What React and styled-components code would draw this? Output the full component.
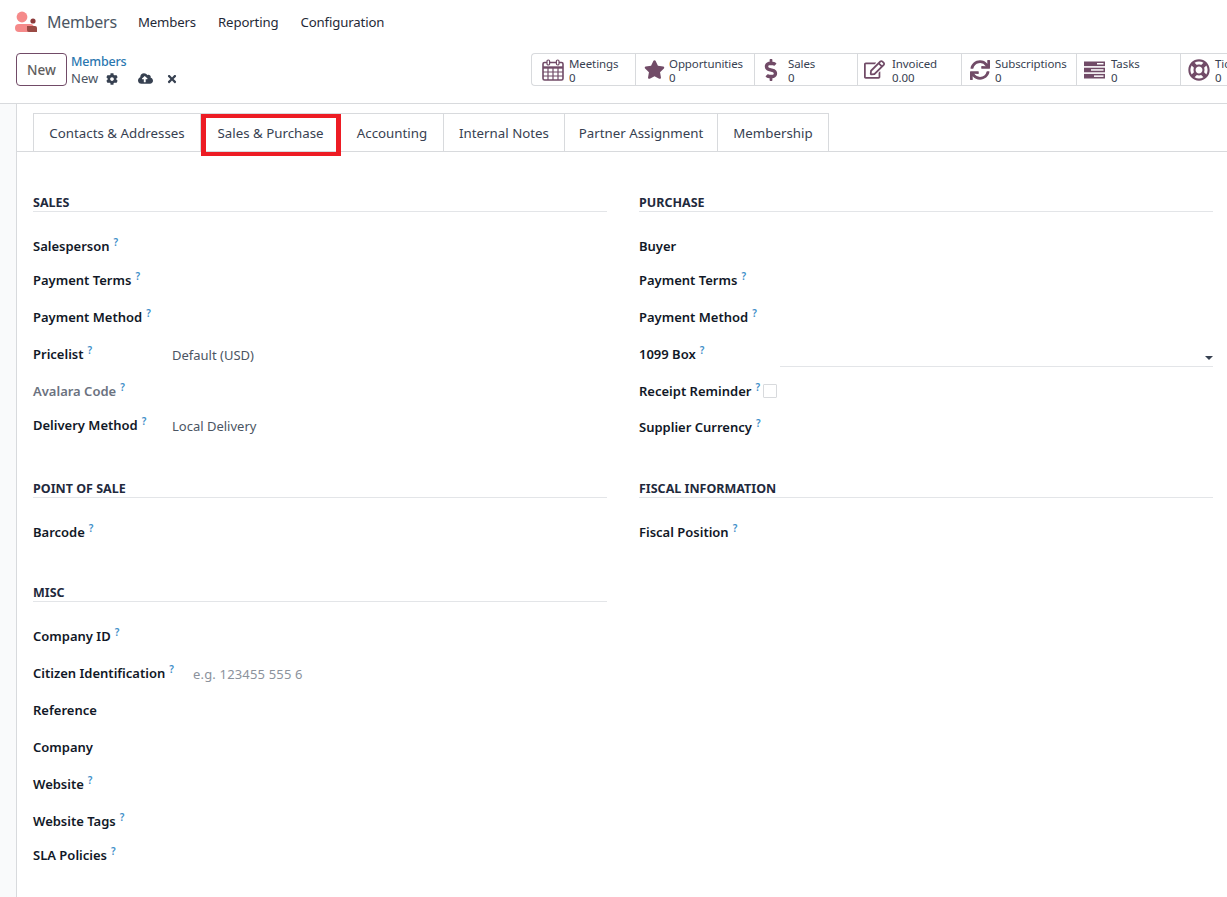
import styled, { createGlobalStyle } from "styled-components";
import { FaCog, FaCloudUploadAlt, FaTimes, FaStar, FaDollarSign, FaRegEdit, FaSync, FaRegLifeRing } from "react-icons/fa";

const GlobalStyle = createGlobalStyle`
    html, body {
        margin: 0;
        padding: 0;
        background: #ffffff;
    }

    body {
        font-family: "Noto Sans", "Open Sans", sans-serif;
        font-size: 13px;
        color: #374151;
    }
`;

const Page = styled.div`
    width: 1227px;
    height: 897px;
    overflow: hidden;
    display: flex;
    flex-direction: column;
`;

const NavBar = styled.nav`
    height: 44px;
    display: flex;
    align-items: center;
    flex: none;
`;

const Logo = styled.svg`
    width: 24px;
    height: 24px;
    margin-left: 15px;
`;

const Brand = styled.span`
    margin-left: 8px;
    margin-right: 21px;
    font-size: 16px;
    letter-spacing: -0.25px;
    color: #4b5563;
`;

const NavItem = styled.span`
    margin-right: 22px;
    font-size: 13.2px;
    letter-spacing: -0.13px;
    color: #1f2937;
`;

const ControlPanel = styled.div`
    height: 59px;
    flex: none;
    display: flex;
    align-items: flex-start;
    border-bottom: 1px solid #d8dadd;
    overflow: hidden;
`;

const PanelLeft = styled.div`
    width: 531px;
    flex: none;
    display: flex;
    padding-left: 16px;
    padding-top: 9px;
    box-sizing: border-box;
`;

const NewButton = styled.button`
    width: 51px;
    height: 33px;
    background: #ffffff;
    border: 1px solid #714b67;
    border-radius: 4px;
    padding: 0;
    font-family: inherit;
    font-size: 13.5px;
    font-weight: 500;
    color: #5f5e5e;
`;

const Breadcrumb = styled.div`
    margin-left: 4px;
    line-height: 17px;
    font-size: 13px;
`;

const CrumbLink = styled.div`
    font-size: 12.5px;
    color: #2a77b0;
    font-weight: 500;
    letter-spacing: -0.2px;
`;

const CrumbCurrent = styled.div`
    display: flex;
    align-items: center;
    color: #4b5563;
    letter-spacing: 0;
`;

const CrumbIcon = styled.span`
    display: inline-flex;
    margin-left: ${p => p.$gap}px;
    font-size: ${p => p.$size}px;
    color: #374151;
`;

const Stats = styled.div`
    display: flex;
    flex: none;
    height: 33px;
    margin-top: 9px;
    border: 1px solid #d8dadd;
    border-right: none;
    border-radius: 4px 0 0 4px;
    box-sizing: border-box;
`;

const Stat = styled.div`
    width: ${p => p.$width}px;
    box-sizing: border-box;
    display: flex;
    align-items: center;
    padding-left: ${p => p.$pad}px;
    border-right: 1px solid #d8dadd;
`;

const StatIcon = styled.span`
    flex: none;
    display: inline-flex;
    justify-content: center;
    width: ${p => p.$size}px;
    margin-right: ${p => p.$gap}px;
    font-size: ${p => p.$size}px;
    color: #714b67;
`;

const StatText = styled.div`
    padding-top: 2px;
    font-size: 11.5px;
    line-height: 14px;
    letter-spacing: -0.1px;
    color: #374151;
    white-space: nowrap;
`;

const Body = styled.div`
    flex: 1;
    display: flex;
    min-height: 0;
`;

const Gutter = styled.div`
    width: 16px;
    flex: none;
    background: #f9fafb;
    border-right: 1px solid #d8dadd;
`;

const Sheet = styled.div`
    flex: 1;
    padding-top: 9px;
    min-width: 0;
`;

const Tabs = styled.div`
    display: flex;
    height: 39px;
    box-sizing: border-box;
    padding-left: 16px;
    border-bottom: 1px solid #d8dadd;
`;

const Tab = styled.div`
    position: relative;
    width: ${p => p.$width}px;
    height: 38px;
    box-sizing: border-box;
    display: flex;
    align-items: center;
    justify-content: center;
    border: 1px solid #d8dadd;
    border-left-width: ${p => (p.$first ? 1 : 0)}px;
    border-bottom: none;
    font-size: 13.3px;
    color: #374151;
`;

const Highlight = styled.div`
    position: absolute;
    left: 0;
    top: 0;
    width: 140px;
    height: 42px;
    box-sizing: border-box;
    border-style: solid;
    border-color: #ed1c24;
    border-width: 4px 5px;
`;

const FormGrid = styled.div`
    display: grid;
    grid-template-columns: 574px 574px;
    column-gap: 32px;
    padding-left: 16px;
`;

const Section = styled.section`
    margin-top: ${p => p.$top}px;
`;

const SectionTitle = styled.h3`
    margin: 0 0 17px;
    height: 20px;
    box-sizing: border-box;
    line-height: 21px;
    border-bottom: 1px solid #e3e5e8;
    font-size: 12.5px;
    font-weight: 700;
    color: #1f2a3d;
`;

const Row = styled.div`
    position: relative;
    height: ${p => p.$height}px;
    display: flex;
    align-items: flex-start;
`;

const Label = styled.div`
    width: ${p => p.$width}px;
    flex: none;
    display: flex;
    line-height: 18px;
    padding-top: 8px;
    font-size: 13px;
    font-weight: 600;
    white-space: nowrap;
    color: ${p => (p.$muted ? "#6b7280" : "#111827")};
`;

const Help = styled.sup`
    margin-left: 4px;
    font-size: 10px;
    line-height: 10px;
    font-weight: 600;
    color: #3f8fc9;
    vertical-align: top;
`;

const Value = styled.div`
    padding-top: 9px;
    line-height: 19px;
    font-size: 13px;
    letter-spacing: ${p => (p.$placeholder ? 0.17 : 0)}px;
    color: ${p => (p.$placeholder ? "#8b929c" : "#4b5563")};
`;

const SelectField = styled.div`
    position: relative;
    flex: 1;
    height: 28px;
    margin-top: 1px;
    border-bottom: 1px solid #e3e5e8;
`;

const Caret = styled.span`
    position: absolute;
    right: 0;
    top: 18px;
    width: 0;
    height: 0;
    border-left: 4px solid transparent;
    border-right: 4px solid transparent;
    border-top: 4px solid #374151;
`;

const Checkbox = styled.span`
    display: block;
    width: 14px;
    height: 14px;
    margin-top: 10px;
    box-sizing: border-box;
    border: 1px solid #d8dadd;
    border-radius: 1px;
    background: #ffffff;
`;

function CalendarIcon() {
    return (
        <svg width="22" height="22" viewBox="0 0 22 22" fill="none" stroke="#714b67">
            <rect x="1" y="3.5" width="20" height="17.5" rx="1.5" strokeWidth="1.6" />
            <path d="M1 8.5h20" strokeWidth="2.4" />
            <path d="M6 9v12M11 9v12M16 9v12M1 13h20M1 17h20" strokeWidth="1.2" />
            <rect x="5" y="1" width="2.6" height="5" rx="1.2" fill="#ffffff" strokeWidth="1.2" />
            <rect x="14.4" y="1" width="2.6" height="5" rx="1.2" fill="#ffffff" strokeWidth="1.2" />
        </svg>
    );
}

function TasksIcon() {
    return (
        <svg width="21" height="18" viewBox="0 0 21 18" fill="#714b67">
            <rect x="0" y="0.5" width="21" height="4.6" />
            <rect x="0" y="6.7" width="21" height="4.6" />
            <rect x="0" y="12.9" width="21" height="4.6" />
            <rect x="13" y="2" width="6.5" height="1.5" fill="#ffffff" />
            <rect x="7" y="8.2" width="12.5" height="1.5" fill="#ffffff" />
            <rect x="10" y="14.4" width="9.5" height="1.5" fill="#ffffff" />
        </svg>
    );
}

const statItems = [
    { title: "Meetings", value: "0", width: 104, pad: 10, size: 22, gap: 5, icon: <CalendarIcon /> },
    { title: "Opportunities", value: "0", width: 119, pad: 8, size: 21, gap: 4, icon: <FaStar /> },
    { title: "Sales", value: "0", width: 103, pad: 5, size: 22, gap: 6, icon: <FaDollarSign /> },
    { title: "Invoiced", value: "0.00", width: 104, pad: 6, size: 21, gap: 7, icon: <FaRegEdit /> },
    { title: "Subscriptions", value: "0", width: 115, pad: 8, size: 20, gap: 5, icon: <FaSync /> },
    { title: "Tasks", value: "0", width: 104, pad: 7, size: 21, gap: 6, icon: <TasksIcon /> },
    { title: "Tickets", value: "0", width: 104, pad: 7, size: 22, gap: 5, icon: <FaRegLifeRing /> },
];

const tabItems = [
    { name: "Contacts & Addresses", width: 168 },
    { name: "Sales & Purchase", width: 140, marked: true },
    { name: "Accounting", width: 103 },
    { name: "Internal Notes", width: 121 },
    { name: "Partner Assignment", width: 153 },
    { name: "Membership", width: 111 },
];

function Field({ name, height, labelWidth, help = true, muted, children }) {
    return (
        <Row $height={height}>
            <Label $width={labelWidth} $muted={muted}>
                {name}
                {help && <Help>?</Help>}
            </Label>
            {children}
        </Row>
    );
}

export default function App() {
    return (
        <Page>
            <GlobalStyle />

            <NavBar>
                <Logo viewBox="0 0 24 24">
                    <circle cx="7" cy="7" r="5.4" fill="#f58a8a" />
                    <path d="M4 14h11a4 4 0 0 1 0 8H4a4 4 0 0 1 0-8z" fill="#f58a8a" />
                    <circle cx="18" cy="11" r="2.6" fill="#8c3a3a" />
                    <path d="M12 16h8a2 2 0 0 1 2 2v4h-8a2 2 0 0 1-2-2z" fill="#9a4a44" />
                </Logo>
                <Brand>Members</Brand>
                <NavItem>Members</NavItem>
                <NavItem>Reporting</NavItem>
                <NavItem>Configuration</NavItem>
            </NavBar>

            <ControlPanel>
                <PanelLeft>
                    <NewButton>New</NewButton>
                    <Breadcrumb>
                        <CrumbLink>Members</CrumbLink>
                        <CrumbCurrent>
                            New
                            <CrumbIcon $gap={8} $size={12}><FaCog /></CrumbIcon>
                            <CrumbIcon $gap={20} $size={15}><FaCloudUploadAlt /></CrumbIcon>
                            <CrumbIcon $gap={13} $size={12}><FaTimes /></CrumbIcon>
                        </CrumbCurrent>
                    </Breadcrumb>
                </PanelLeft>
                <Stats>
                    {statItems.map(item => (
                        <Stat key={item.title} $width={item.width} $pad={item.pad}>
                            <StatIcon $size={item.size} $gap={item.gap}>{item.icon}</StatIcon>
                            <StatText>
                                {item.title}
                                <br />
                                {item.value}
                            </StatText>
                        </Stat>
                    ))}
                </Stats>
            </ControlPanel>

            <Body>
                <Gutter />
                <Sheet>
                    <Tabs>
                        {tabItems.map((tab, i) => (
                            <Tab key={tab.name} $width={tab.width} $first={i === 0}>
                                {tab.name}
                                {tab.marked && <Highlight />}
                            </Tab>
                        ))}
                    </Tabs>

                    <FormGrid>
                        <div>
                            <Section $top={40}>
                                <SectionTitle>SALES</SectionTitle>
                                <Field name="Salesperson" height={34} labelWidth={139} />
                                <Field name="Payment Terms" height={37} labelWidth={139} />
                                <Field name="Payment Method" height={37} labelWidth={139} />
                                <Field name="Pricelist" height={37} labelWidth={139}>
                                    <Value>Default (USD)</Value>
                                </Field>
                                <Field name="Avalara Code" height={34} labelWidth={139} muted />
                                <Field name="Delivery Method" height={34} labelWidth={139}>
                                    <Value>Local Delivery</Value>
                                </Field>
                            </Section>
                            <Section $top={36}>
                                <SectionTitle>POINT OF SALE</SectionTitle>
                                <Field name="Barcode" height={34} labelWidth={139} />
                            </Section>
                            <Section $top={33}>
                                <SectionTitle>MISC</SectionTitle>
                                <Field name="Company ID" height={37} labelWidth={160} />
                                <Field name="Citizen Identification" height={37} labelWidth={160}>
                                    <Value $placeholder>e.g. 123455 555 6</Value>
                                </Field>
                                <Field name="Reference" height={37} labelWidth={160} help={false} />
                                <Field name="Company" height={37} labelWidth={160} help={false} />
                                <Field name="Website" height={37} labelWidth={160} />
                                <Field name="Website Tags" height={34} labelWidth={160} />
                                <Field name="SLA Policies" height={34} labelWidth={160} />
                            </Section>
                        </div>

                        <div>
                            <Section $top={40}>
                                <SectionTitle>PURCHASE</SectionTitle>
                                <Field name="Buyer" height={34} labelWidth={141} help={false} />
                                <Field name="Payment Terms" height={37} labelWidth={141} />
                                <Field name="Payment Method" height={37} labelWidth={141} />
                                <Field name="1099 Box" height={37} labelWidth={141}>
                                    <SelectField><Caret /></SelectField>
                                </Field>
                                <Field name="Receipt Reminder" height={36} labelWidth={124}>
                                    <Checkbox />
                                </Field>
                                <Field name="Supplier Currency" height={34} labelWidth={141} />
                            </Section>
                            <Section $top={34}>
                                <SectionTitle>FISCAL INFORMATION</SectionTitle>
                                <Field name="Fiscal Position" height={34} labelWidth={141} />
                            </Section>
                        </div>
                    </FormGrid>
                </Sheet>
            </Body>
        </Page>
    );
}
